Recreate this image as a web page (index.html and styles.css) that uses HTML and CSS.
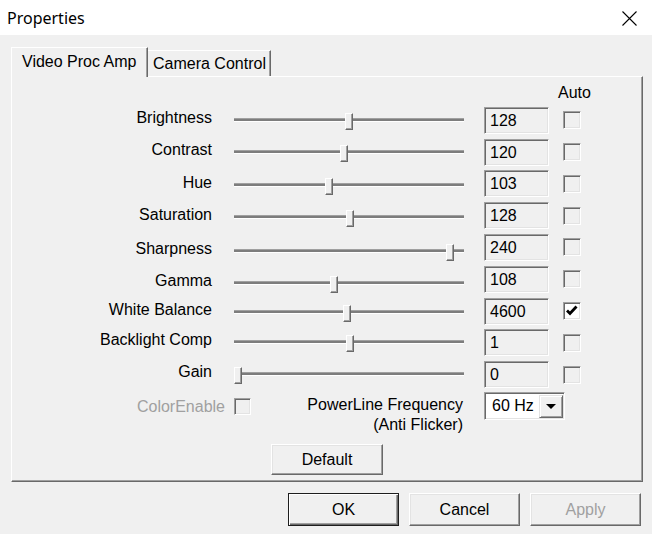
FILE: index.html
```html
<!DOCTYPE html>
<html>
<head>
<meta charset="utf-8">
<title>Properties</title>
<link rel="stylesheet" href="styles.css">
</head>
<body>
<div class="titlebar">
  <span class="title">Properties</span>
  <svg class="close" width="15" height="15" viewBox="0 0 15 15"><path d="M0.5 0.5 L14.5 14.5 M14.5 0.5 L0.5 14.5" stroke="#000" stroke-width="1.1" fill="none"/></svg>
</div>
<div class="client">
  <div class="tabs">
    <div class="tab active">Video Proc Amp</div>
    <div class="tab">Camera Control</div>
  </div>
  <div class="panel">
    <div class="auto-row"><span class="auto">Auto</span></div>
    <div class="rows">
      <div class="row"><div class="label">Brightness</div><div class="slider"><div class="groove"></div><div class="thumb" style="left:111px"></div></div><div class="box">128</div><div class="check"></div></div>
      <div class="row"><div class="label">Contrast</div><div class="slider"><div class="groove"></div><div class="thumb" style="left:106px"></div></div><div class="box">120</div><div class="check"></div></div>
      <div class="row s2"><div class="label">Hue</div><div class="slider"><div class="groove"></div><div class="thumb" style="left:91px"></div></div><div class="box">103</div><div class="check"></div></div>
      <div class="row s2"><div class="label">Saturation</div><div class="slider"><div class="groove"></div><div class="thumb" style="left:112px"></div></div><div class="box">128</div><div class="check"></div></div>
      <div class="row s4"><div class="label">Sharpness</div><div class="slider"><div class="groove"></div><div class="thumb" style="left:212px"></div></div><div class="box">240</div><div class="check"></div></div>
      <div class="row s4"><div class="label">Gamma</div><div class="slider"><div class="groove"></div><div class="thumb" style="left:96px"></div></div><div class="box">108</div><div class="check"></div></div>
      <div class="row s1"><div class="label">White Balance</div><div class="slider"><div class="groove"></div><div class="thumb" style="left:109px"></div></div><div class="box">4600</div><div class="check checked"><svg width="14" height="14" viewBox="0 0 14 14"><path d="M2 6.5 L5 9.5 L11.5 2.5" stroke="#000" stroke-width="2.8" fill="none"/></svg></div></div>
      <div class="row"><div class="label">Backlight Comp</div><div class="slider"><div class="groove"></div><div class="thumb" style="left:112px"></div></div><div class="box">1</div><div class="check"></div></div>
      <div class="row"><div class="label">Gain</div><div class="slider"><div class="groove"></div><div class="thumb" style="left:0px"></div></div><div class="box">0</div><div class="check"></div></div>
    </div>
    <div class="extra-row">
      <div class="ce-label">ColorEnable</div>
      <div class="check ce-check"></div>
      <div class="pl-label">PowerLine Frequency<br>(Anti Flicker)</div>
      <div class="combo"><span class="combo-text">60 Hz</span><span class="drop"><svg width="10" height="5" viewBox="0 0 10 5"><path d="M0 0 H10 L5 5 Z" fill="#000"/></svg></span></div>
    </div>
    <div class="default-row"><div class="btn default">Default</div></div>
  </div>
  <div class="buttons">
    <div class="btn primary">OK</div>
    <div class="btn">Cancel</div>
    <div class="btn disabled">Apply</div>
  </div>
</div>
</body>
</html>
```
FILE: styles.css
```css
* { box-sizing: border-box; }
html, body { margin: 0; padding: 0; }
body {
  width: 652px;
  height: 534px;
  overflow: hidden;
  background: #f0f0f0;
  font-family: "Liberation Sans", Arial, sans-serif;
  font-size: 16px;
  color: #000;
}
.titlebar {
  height: 35px;
  background: #fff;
  display: flex;
  align-items: center;
  justify-content: space-between;
  padding: 0 15px 0 7px;
}
.title {
  font-family: "Noto Sans", sans-serif;
  font-size: 16px;
  line-height: 20px;
}
.close { display: block; margin-top: 1px; }

.client { padding: 12px 9px 0 11px; }

.tabs {
  display: flex;
  align-items: flex-end;
  height: 30px;
  margin-bottom: -1px;
  position: relative;
  z-index: 1;
}
.tab {
  line-height: 18px;
  border-top: 1px solid #fff;
  border-right: 1px solid #696969;
  box-shadow: inset -1px 0 0 #a0a0a0;
  background: #f0f0f0;
}
.tab.active {
  width: 137px;
  height: 30px;
  border-left: 1px solid #fff;
  padding: 5px 0 0 10px;
}
.tab:not(.active) {
  width: 123px;
  height: 26px;
  margin-bottom: 1px;
  padding: 4px 0 0 5px;
}

.panel {
  width: 632px;
  height: 406px;
  border-top: 1px solid #fff;
  border-left: 1px solid #fff;
  border-right: 1px solid #696969;
  border-bottom: 1px solid #696969;
  box-shadow: inset -1px -1px 0 #a0a0a0;
  padding-top: 7px;
}
.auto-row { height: 18px; line-height: 18px; padding-left: 546px; }

.rows {
  display: flex;
  flex-direction: column;
  gap: 4.8px;
  margin-top: 4.8px;
}
.row {
  --shift: 0px;
  display: flex;
  align-items: center;
  height: 27px;
}
.row.s1 { --shift: 1px; }
.row.s2 { --shift: 2px; }
.row.s4 { --shift: 4px; }
.label {
  width: 200px;
  text-align: right;
  line-height: 20px;
  align-self: flex-start;
  padding-top: calc(1px + var(--shift));
}
.slider {
  position: relative;
  width: 230px;
  height: 27px;
  margin-left: 22px;
  align-self: flex-start;
  margin-top: var(--shift);
}
.groove {
  position: absolute;
  left: 0;
  right: 0;
  top: 11px;
  height: 4px;
  border-top: 1px solid #a0a0a0;
  border-bottom: 1px solid #fff;
  background: #7d7d7d;
}
.thumb {
  position: absolute;
  top: 6px;
  width: 8px;
  height: 17px;
  background: #f0f0f0;
  border-left: 1px solid #fff;
  border-top: 1px solid #fff;
  border-right: 1px solid #696969;
  border-bottom: 1px solid #696969;
  box-shadow: inset -1px -1px 0 #a0a0a0;
}
.box {
  width: 65px;
  height: 27px;
  margin-left: 20px;
  padding-left: 5px;
  line-height: 23px;
  border-top: 1px solid #a0a0a0;
  border-left: 1px solid #a0a0a0;
  border-right: 1px solid #fff;
  border-bottom: 1px solid #fff;
  box-shadow: inset 1px 1px 0 #696969, inset -1px -1px 0 #e3e3e3;
  background: #f0f0f0;
  padding-top: 1px;
}
.check {
  width: 18px;
  height: 18px;
  margin-left: 14px;
  border-top: 1px solid #a0a0a0;
  border-left: 1px solid #a0a0a0;
  border-right: 1px solid #fff;
  border-bottom: 1px solid #fff;
  box-shadow: inset 1px 1px 0 #696969, inset -1px -1px 0 #e3e3e3;
  background: #f0f0f0;
  display: flex;
  align-items: center;
  justify-content: center;
}
.check.checked { background: #fff; }
.check svg { display: block; }

.extra-row {
  display: flex;
  align-items: flex-start;
  margin-top: 4px;
  height: 43px;
}
.ce-label {
  width: 213px;
  text-align: right;
  color: #a0a0a0;
  line-height: 20px;
  margin-top: 5px;
}
.ce-check {
  width: 17px;
  height: 17px;
  margin-left: 9px;
  margin-top: 6px;
}
.pl-label {
  width: 212px;
  text-align: right;
  line-height: 20px;
  margin-top: 3px;
}
.combo {
  width: 81px;
  height: 28px;
  margin-left: 21px;
  display: flex;
  align-items: center;
  justify-content: space-between;
  background: #fff;
  border-top: 1px solid #a0a0a0;
  border-left: 1px solid #a0a0a0;
  border-right: 1px solid #fff;
  border-bottom: 1px solid #fff;
  box-shadow: inset 1px 1px 0 #696969, inset -1px -1px 0 #e3e3e3;
  padding: 2px 1px 2px 7px;
}
.combo-text { line-height: 20px; }
.drop {
  width: 24px;
  height: 23px;
  background: #f0f0f0;
  border-top: 1px solid #e3e3e3;
  border-left: 1px solid #e3e3e3;
  border-right: 1px solid #696969;
  border-bottom: 1px solid #696969;
  box-shadow: inset 1px 1px 0 #fff, inset -1px -1px 0 #a0a0a0;
  display: flex;
  align-items: center;
  justify-content: center;
}
.drop svg { display: block; }

.default-row {
  margin-top: 9px;
  padding-left: 259px;
}
.btn {
  width: 111px;
  height: 33px;
  display: flex;
  align-items: center;
  justify-content: center;
  background: #f0f0f0;
  border-top: 1px solid #fff;
  border-left: 1px solid #fff;
  border-right: 1px solid #696969;
  border-bottom: 1px solid #696969;
  box-shadow: inset -1px -1px 0 #a0a0a0, inset 1px 1px 0 #e3e3e3;
}
.btn.default { width: 112px; height: 31px; }
.btn.primary {
  border: 1px solid #1e1e1e;
  box-shadow: inset 1px 1px 0 #fff, inset -1px -1px 0 #696969, inset -2px -2px 0 #a0a0a0;
}
.btn.disabled { color: #a0a0a0; }

.buttons {
  display: flex;
  justify-content: flex-end;
  gap: 10px;
  margin-top: 11px;
  margin-right: 2px;
}
```
